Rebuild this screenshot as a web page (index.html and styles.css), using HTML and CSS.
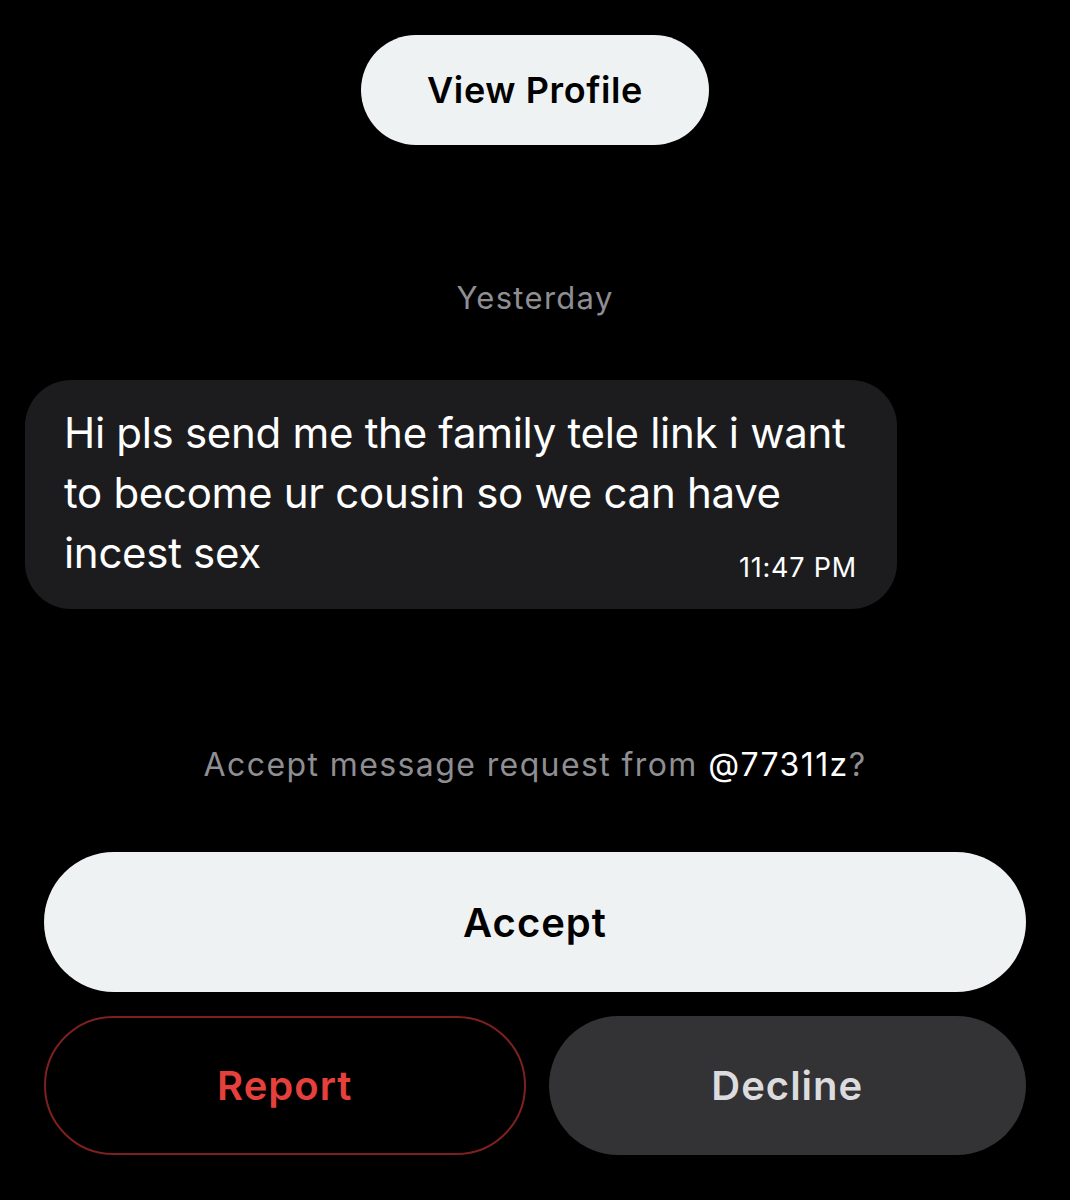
FILE: index.html
```html
<!DOCTYPE html>
<html lang="en">
<head>
    <meta charset="UTF-8">
    <title>Message request</title>
    <link rel="stylesheet" href="styles.css">
</head>
<body>
    <div class="screen">
        <div class="profile-row">
            <button class="profile-btn">View Profile</button>
        </div>
        <div class="day-label">Yesterday</div>
        <div class="bubble">
            <p class="bubble-text">Hi pls send me the family tele link i want to become ur cousin so we can have incest sex <span class="bubble-time">11:47 PM</span></p>
        </div>
        <div class="request-note">Accept message request from <span class="handle">@77311z</span>?</div>
        <div class="actions">
            <button class="btn btn-accept">Accept</button>
            <div class="btn-row">
                <button class="btn btn-report">Report</button>
                <button class="btn btn-decline">Decline</button>
            </div>
        </div>
    </div>
</body>
</html>
```

FILE: styles.css
```css
/* page */
body, html {
    margin: 0;
    padding: 0;
    background: #000;
}
.screen {
    width: 1070px;
    height: 1200px;
    font-family: 'Inter', 'Liberation Sans', sans-serif;
    color: #fff;
}
button {
    font-family: inherit;
    border: none;
    cursor: pointer;
}
/* view profile */
.profile-row {
    padding-top: 35px;
    display: flex;
    justify-content: center;
}
.profile-btn {
    width: 348px;
    height: 110px;
    border-radius: 55px;
    background: #eff2f3;
    color: #000;
    font-size: 36px;
    font-weight: 600;
    letter-spacing: 0.6px;
}
/* date separator */
.day-label {
    margin-top: 135px;
    text-align: center;
    color: #8e8e93;
    font-size: 31px;
    line-height: 36px;
    letter-spacing: 1.3px;
}
/* message bubble */
.bubble {
    margin: 64px 0 0 25px;
    width: 872px;
    box-sizing: border-box;
    padding: 23px 40px 26px 39px;
    background: #1c1c1e;
    border-radius: 46px;
    display: flex;
}
.bubble-text {
    margin: 0;
    flex: 1;
    font-size: 42px;
    line-height: 60px;
    letter-spacing: -0.3px;
}
/* time sits at the end of the last line */
.bubble-time {
    float: right;
    margin-top: 30px;
    font-size: 27px;
    line-height: 30px;
    letter-spacing: 0.8px;
}
/* request text */
.request-note {
    margin-top: 136px;
    text-align: center;
    color: #8e8e93;
    font-size: 32px;
    line-height: 40px;
    letter-spacing: 1.4px;
}
.handle {
    color: #fff;
}
/* buttons */
.actions {
    margin-top: 67px;
    padding: 0 44px;
    display: flex;
    flex-direction: column;
    gap: 24px;
}
.btn {
    height: 140px;
    border-radius: 70px;
    font-size: 40px;
    font-weight: 600;
    letter-spacing: 1px;
}
.btn-accept {
    background: #eff2f3;
    color: #000;
}
.btn-row {
    display: flex;
    gap: 23px;
}
.btn-row .btn {
    flex: 1;
    height: 139px;
}
.btn-report {
    background: #000;
    border: 2px solid #7e2020;
    color: #e5403b;
}
.btn-decline {
    background: #333336;
    color: #dcdcdf;
}
```
